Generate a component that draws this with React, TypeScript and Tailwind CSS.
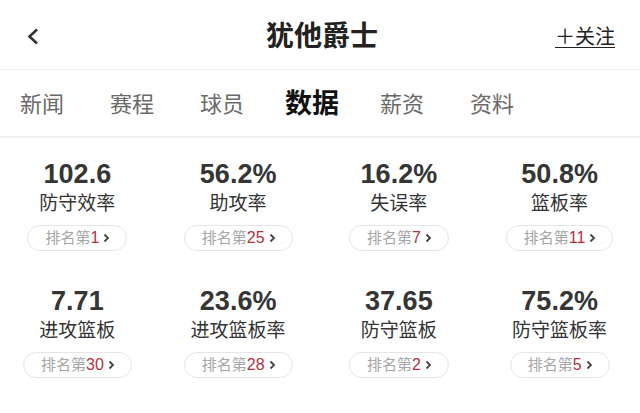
const stats = [
  { value: "102.6", label: "防守效率", rank: "1" },
  { value: "56.2%", label: "助攻率", rank: "25" },
  { value: "16.2%", label: "失误率", rank: "7" },
  { value: "50.8%", label: "篮板率", rank: "11" },
  { value: "7.71", label: "进攻篮板", rank: "30" },
  { value: "23.6%", label: "进攻篮板率", rank: "28" },
  { value: "37.65", label: "防守篮板", rank: "2" },
  { value: "75.2%", label: "防守篮板率", rank: "5" },
];

const tabs = ["新闻", "赛程", "球员", "数据", "薪资", "资料"];

function StatCell({ value, label, rank }: { value: string; label: string; rank: string }) {
  return (
    <div className="flex flex-col items-center">
      <div className="text-[27px] leading-[30px] font-bold text-[#353535]">{value}</div>
      <div className="mt-[3px] text-[19px] leading-[24px] text-[#333]">{label}</div>
      <div className="mt-[9px] flex h-[26px] items-center rounded-full border border-[#e6e6e6] pl-[17px] pr-[16px]">
        <span className="text-[15px] text-[#a6a6a6]">排名第</span>
        <span className="text-[16px] text-[#b3323e]">{rank}</span>
        <svg width="7" height="10" viewBox="0 0 7 10" className="ml-[4px]">
          <polyline points="1.5,1.5 5,5 1.5,8.5" fill="none" stroke="#444" strokeWidth="1.8" />
        </svg>
      </div>
    </div>
  );
}

export default function App() {
  return (
    <div
      className="h-[413px] w-[640px] overflow-hidden bg-white"
      style={{ fontFamily: '"Liberation Sans", "Noto Sans CJK SC", sans-serif' }}
    >
      {/* header */}
      <div className="grid h-[70px] grid-cols-[1fr_auto_1fr] items-center border-b-[1.5px] border-[#ececec] pt-[4px] pl-[27px] pr-[25px]">
        <svg width="12" height="17" viewBox="0 0 12 17">
          <polyline points="10,1.5 2.5,8.5 10,15.5" fill="none" stroke="#333" strokeWidth="2.6" />
        </svg>
        <div className="ml-[2px] text-[28px] font-bold text-[#222]">犹他爵士</div>
        <div className="justify-self-end text-[20px] text-[#222] underline decoration-1 underline-offset-[3px]">＋关注</div>
      </div>

      {/* tabs */}
      <div className="flex h-[68px] items-center border-b-2 border-[#f0f0f0] ml-[-3px] pt-[3px]">
        {tabs.map((t) => (
          <div
            key={t}
            className={
              t === "数据"
                ? "w-[90px] text-center text-[27px] font-bold text-[#111]"
                : "w-[90px] text-center text-[22px] text-[#6a6a6a]"
            }
          >
            {t}
          </div>
        ))}
      </div>

      {/* stats */}
      <div className="ml-[-3px] grid grid-cols-4 gap-y-[35px] pt-[21px]">
        {stats.map((s) => (
          <StatCell key={s.label} {...s} />
        ))}
      </div>
    </div>
  );
}
